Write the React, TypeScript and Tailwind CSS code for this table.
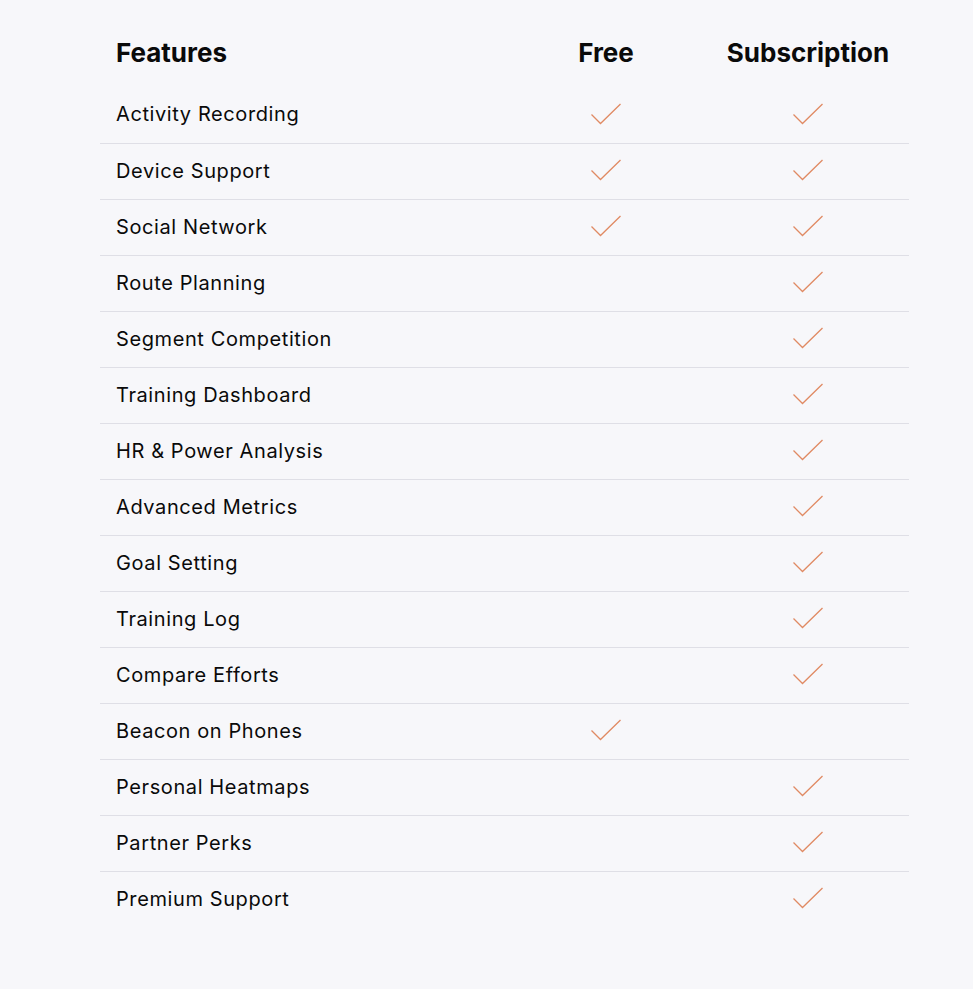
const rows: { name: string; free: boolean; sub: boolean }[] = [
  { name: "Activity Recording", free: true, sub: true },
  { name: "Device Support", free: true, sub: true },
  { name: "Social Network", free: true, sub: true },
  { name: "Route Planning", free: false, sub: true },
  { name: "Segment Competition", free: false, sub: true },
  { name: "Training Dashboard", free: false, sub: true },
  { name: "HR & Power Analysis", free: false, sub: true },
  { name: "Advanced Metrics", free: false, sub: true },
  { name: "Goal Setting", free: false, sub: true },
  { name: "Training Log", free: false, sub: true },
  { name: "Compare Efforts", free: false, sub: true },
  { name: "Beacon on Phones", free: true, sub: false },
  { name: "Personal Heatmaps", free: false, sub: true },
  { name: "Partner Perks", free: false, sub: true },
  { name: "Premium Support", free: false, sub: true },
];

function Check() {
  return (
    <svg width="32" height="22" viewBox="0 0 32 22" fill="none" className="-mt-[3px]">
      <path d="M1.5 11.5 L10.5 20.5 L30.5 1" stroke="#e08a63" strokeWidth="1.3" />
    </svg>
  );
}

export default function App() {
  return (
    <div className="min-h-[989px] bg-[#f7f7fa] pt-6 font-['Inter',sans-serif] text-[#0a0a0a]">
      <div className="mx-[100px] w-[809px]">
        <div className="grid h-14 grid-cols-[405px_202px_202px] items-center text-[26px] font-bold">
          <div className="pl-4">Features</div>
          <div className="text-center">Free</div>
          <div className="text-center">Subscription</div>
        </div>

        <div className="mt-[7px]">
          {rows.map((r, i) => (
            <div
              key={r.name}
              className={
                i === 0
                  ? "grid h-14 grid-cols-[405px_202px_202px] items-center"
                  : "grid h-14 grid-cols-[405px_202px_202px] items-center border-t border-[#dfdfe6]"
              }
            >
              <div className="-mt-[2px] pl-4 text-[20px] tracking-[0.6px]">{r.name}</div>
              <div className="flex justify-center">{r.free && <Check />}</div>
              <div className="flex justify-center">{r.sub && <Check />}</div>
            </div>
          ))}
        </div>
      </div>
    </div>
  );
}
